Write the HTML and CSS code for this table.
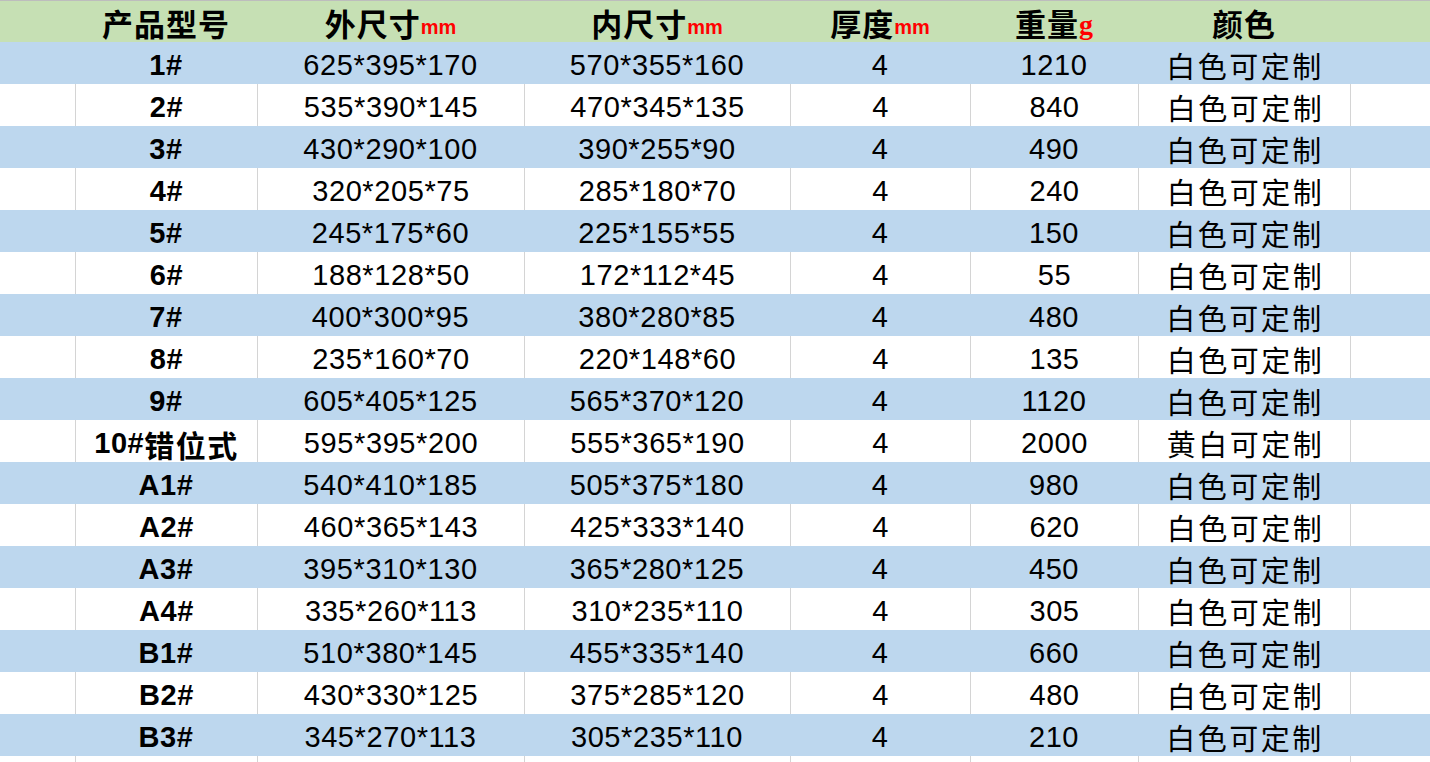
FILE: index.html
```html
<!DOCTYPE html>
<html lang="zh-CN">
<head>
<meta charset="utf-8">
<title>产品型号</title>
<link rel="stylesheet" href="styles.css">
</head>
<body>
<div class="sheet">
  <div class="row head">
    <div class="c"></div>
    <div class="c">产品型号</div>
    <div class="c">外尺寸<span class="u">mm</span></div>
    <div class="c">内尺寸<span class="u">mm</span></div>
    <div class="c">厚度<span class="u">mm</span></div>
    <div class="c">重量<span class="g">g</span></div>
    <div class="c">颜色</div>
    <div class="c"></div>
  </div>
  <div class="row blue"><div class="c"></div><div class="c b">1#</div><div class="c">625*395*170</div><div class="c">570*355*160</div><div class="c">4</div><div class="c">1210</div><div class="c z">白色可定制</div><div class="c"></div></div>
  <div class="row white"><div class="c"></div><div class="c b">2#</div><div class="c">535*390*145</div><div class="c">470*345*135</div><div class="c">4</div><div class="c">840</div><div class="c z">白色可定制</div><div class="c"></div></div>
  <div class="row blue"><div class="c"></div><div class="c b">3#</div><div class="c">430*290*100</div><div class="c">390*255*90</div><div class="c">4</div><div class="c">490</div><div class="c z">白色可定制</div><div class="c"></div></div>
  <div class="row white"><div class="c"></div><div class="c b">4#</div><div class="c">320*205*75</div><div class="c">285*180*70</div><div class="c">4</div><div class="c">240</div><div class="c z">白色可定制</div><div class="c"></div></div>
  <div class="row blue"><div class="c"></div><div class="c b">5#</div><div class="c">245*175*60</div><div class="c">225*155*55</div><div class="c">4</div><div class="c">150</div><div class="c z">白色可定制</div><div class="c"></div></div>
  <div class="row white"><div class="c"></div><div class="c b">6#</div><div class="c">188*128*50</div><div class="c">172*112*45</div><div class="c">4</div><div class="c">55</div><div class="c z">白色可定制</div><div class="c"></div></div>
  <div class="row blue"><div class="c"></div><div class="c b">7#</div><div class="c">400*300*95</div><div class="c">380*280*85</div><div class="c">4</div><div class="c">480</div><div class="c z">白色可定制</div><div class="c"></div></div>
  <div class="row white"><div class="c"></div><div class="c b">8#</div><div class="c">235*160*70</div><div class="c">220*148*60</div><div class="c">4</div><div class="c">135</div><div class="c z">白色可定制</div><div class="c"></div></div>
  <div class="row blue"><div class="c"></div><div class="c b">9#</div><div class="c">605*405*125</div><div class="c">565*370*120</div><div class="c">4</div><div class="c">1120</div><div class="c z">白色可定制</div><div class="c"></div></div>
  <div class="row white"><div class="c"></div><div class="c b">10#<span class="zb">错位式</span></div><div class="c">595*395*200</div><div class="c">555*365*190</div><div class="c">4</div><div class="c">2000</div><div class="c z">黄白可定制</div><div class="c"></div></div>
  <div class="row blue"><div class="c"></div><div class="c b">A1#</div><div class="c">540*410*185</div><div class="c">505*375*180</div><div class="c">4</div><div class="c">980</div><div class="c z">白色可定制</div><div class="c"></div></div>
  <div class="row white"><div class="c"></div><div class="c b">A2#</div><div class="c">460*365*143</div><div class="c">425*333*140</div><div class="c">4</div><div class="c">620</div><div class="c z">白色可定制</div><div class="c"></div></div>
  <div class="row blue"><div class="c"></div><div class="c b">A3#</div><div class="c">395*310*130</div><div class="c">365*280*125</div><div class="c">4</div><div class="c">450</div><div class="c z">白色可定制</div><div class="c"></div></div>
  <div class="row white"><div class="c"></div><div class="c b">A4#</div><div class="c">335*260*113</div><div class="c">310*235*110</div><div class="c">4</div><div class="c">305</div><div class="c z">白色可定制</div><div class="c"></div></div>
  <div class="row blue"><div class="c"></div><div class="c b">B1#</div><div class="c">510*380*145</div><div class="c">455*335*140</div><div class="c">4</div><div class="c">660</div><div class="c z">白色可定制</div><div class="c"></div></div>
  <div class="row white"><div class="c"></div><div class="c b">B2#</div><div class="c">430*330*125</div><div class="c">375*285*120</div><div class="c">4</div><div class="c">480</div><div class="c z">白色可定制</div><div class="c"></div></div>
  <div class="row blue"><div class="c"></div><div class="c b">B3#</div><div class="c">345*270*113</div><div class="c">305*235*110</div><div class="c">4</div><div class="c">210</div><div class="c z">白色可定制</div><div class="c"></div></div>
  <div class="row white"><div class="c"></div><div class="c b"></div><div class="c"></div><div class="c"></div><div class="c"></div><div class="c"></div><div class="c"></div><div class="c"></div></div>
</div>
</body>
</html>
```

FILE: styles.css
```css
html, body {
  margin: 0;
  padding: 0;
  background: #ffffff;
  overflow: hidden;
}

.sheet {
  width: 1430px;
  font-family: "Liberation Sans", "Noto Sans CJK SC", sans-serif;
  font-size: 29px;
  color: #000000;
}

.row {
  display: grid;
  grid-template-columns: 75px 182px 267px 266px 180px 168px 212px 80px;
  height: 42px;
  box-sizing: border-box;
}

.c {
  display: flex;
  align-items: center;
  justify-content: center;
  white-space: nowrap;
  padding-top: 5px;
  box-sizing: border-box;
  line-height: 1;
  letter-spacing: 0.6px;
}

.z {
  font-family: "Noto Sans CJK SC", sans-serif;
  font-size: 29px;
  letter-spacing: 2.5px;
  padding-left: 2px;
}

.zb {
  font-family: "Noto Sans CJK SC", sans-serif;
  font-size: 30px;
  letter-spacing: 1.5px;
}

.head {
  background: #c6e0b4;
  border-top: 1px solid #bdbdbd;
  font-family: "Noto Sans CJK SC", "Liberation Sans", sans-serif;
  font-weight: 700;
  font-size: 31px;
}

.head .c {
  padding-top: 2px;
  align-items: center;
  letter-spacing: 1px;
}

.u {
  font-family: "Liberation Sans", sans-serif;
  color: #ff0000;
  font-size: 20px;
  font-weight: 700;
  letter-spacing: 0;
  margin-top: 8px;
}

.g {
  font-family: "Liberation Serif", serif;
  color: #ff0000;
  font-size: 28px;
  font-weight: 700;
  letter-spacing: 0;
  margin-top: 4px;
}

.blue {
  background: #bdd7ee;
}

.white {
  background: #ffffff;
}

.white .c + .c {
  border-left: 1px solid #d4d4d4;
}

.b {
  font-weight: 700;
}
```
